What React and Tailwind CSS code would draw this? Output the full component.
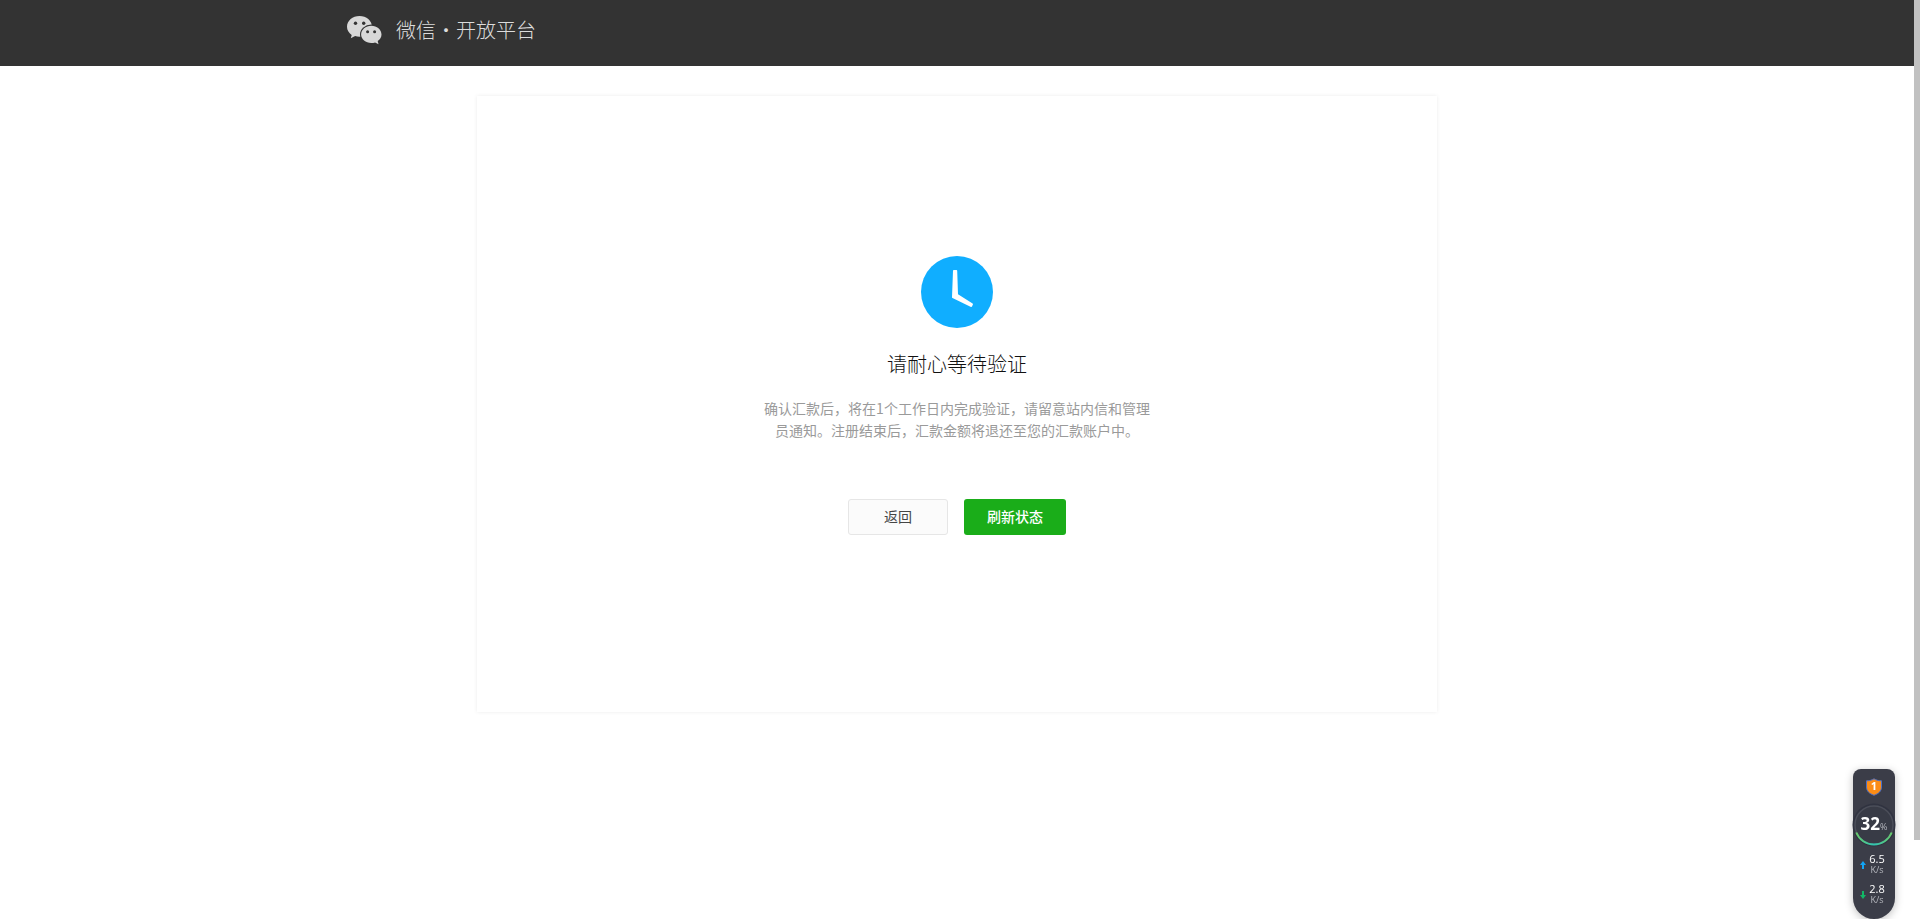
import React from "react";
import { clsx } from "clsx";

const SPEEDS = [
  { id: "up", value: "6.5", label: "Upload", tone: "text-[#12a5f5]" },
  { id: "down", value: "2.8", label: "Download", tone: "text-[#12b866]" },
];

function WechatLogo() {
  return (
    <svg width="35" height="29" viewBox="0 0 35 29" aria-hidden="true">
      <path
        fill="#d8d8d8"
        d="M12.500 0C5.600 0 0 4.700 0 10.800c0 3.300 1.800 6.200 4.700 8.100L3.800 22.300l4.300-2.200c1.400.4 2.900.7 4.400.7 6.900 0 12.500-4.600 12.500-10.300S19.400 0 12.500 0Z"
      />
      <ellipse cx="24.300" cy="18.400" rx="11.300" ry="9.900" fill="#333333" />
      <path
        fill="#d8d8d8"
        d="M24.300 9.800c5.600 0 10.200 3.900 10.200 8.700 0 2.700-1.500 5-3.800 6.600l.8 3.100-3.400-1.800c-1.200.4-2.500.6-3.800.6-5.600 0-10.200-3.800-10.200-8.500s4.600-8.700 10.200-8.700Z"
      />
      <g fill="#333333">
        <circle cx="8.500" cy="7.200" r="1.700" />
        <circle cx="16.700" cy="7.200" r="1.700" />
        <circle cx="20.600" cy="15.700" r="1.500" />
        <circle cx="27.600" cy="15.700" r="1.500" />
      </g>
    </svg>
  );
}

function WaitingIcon() {
  return (
    <svg width="72" height="72" viewBox="0 0 72 72" aria-hidden="true">
      <circle cx="36" cy="36" r="36" fill="#10aeff" />
      <path
        fill="#ffffff"
        d="M32.800 14h2.600c.5 0 .8.3.8.8L37 38.300l14.600 9.300c.4.2.5.600.3 1l-.9 1.900c-.2.4-.6.5-1 .4L31.500 42.100c-.4-.2-.5-.4-.5-.8L32 14.800c0-.5.3-.8.8-.8Z"
      />
    </svg>
  );
}

function Header() {
  return (
    <header className="bg-[#333333] px-6">
      <div className="mx-auto flex h-[66px] max-w-[1220px] items-start gap-[14px] pt-4">
        <WechatLogo />
        <a href="#home" className="text-[20px] leading-7 font-light text-[#dcdcdc]">
          微信・开放平台
        </a>
      </div>
    </header>
  );
}

function SpeedArrow({ direction }) {
  return (
    <svg width="6" height="8" viewBox="0 0 6 8" aria-hidden="true">
      <path
        fill="currentColor"
        d={direction === "up" ? "M3 0 6 4H4V8H2V4H0Z" : "M3 8 0 4h2V0h2v4h2Z"}
      />
    </svg>
  );
}

function SystemMonitor() {
  return (
    <aside className="fixed right-[25px] bottom-0 flex h-[150px] w-[42px] flex-col items-center rounded-t-lg rounded-b-[21px] bg-[#3b3d48] font-['Open_Sans','Noto_Sans',sans-serif] text-white shadow-[0_2px_8px_rgba(0,0,0,0.25)]">
      <svg width="18" height="18" viewBox="0 0 18 18" className="mt-[9px] shrink-0" aria-hidden="true">
        <path
          d="M9 .8c2 1.300 4.500 2 7.500 2V9c0 4-2.700 6.600-7.500 8.300C4.200 15.600 1.500 13 1.500 9V2.800c3 0 5.500-.7 7.500-2Z"
          fill="#fb8c16"
          stroke="#4b70c8"
          strokeWidth="1"
        />
        <text x="9" y="12" textAnchor="middle" fontSize="11" fontWeight="700" fill="#ffffff">
          1
        </text>
      </svg>
      <div className="relative mt-2 flex h-[42px] w-[42px] shrink-0 items-center justify-center">
        <svg width="44" height="44" viewBox="0 0 44 44" className="absolute -left-px -top-px" aria-hidden="true">
          <defs>
            <linearGradient id="usage">
              <stop offset="0" stopColor="#69c96b" />
              <stop offset="0.500" stopColor="#2fc4b2" />
              <stop offset="1" stopColor="#69c96b" />
            </linearGradient>
          </defs>
          <circle cx="22" cy="22" r="21.500" fill="#303340" />
          <circle cx="22" cy="22" r="19" fill="#383b46" stroke="#4b4e59" strokeWidth="1.500" />
          <path d="M4.300 29.500a19 19 0 0 0 35.400 0" fill="none" stroke="url(#usage)" strokeWidth="2" />
        </svg>
        <span className="relative flex items-baseline text-[17px] leading-5 font-bold">
          32<span className="text-[9px] font-normal text-[#b5b7bd]">%</span>
        </span>
      </div>
      <dl className="mt-2 flex flex-col gap-[9px]">
        {SPEEDS.map((s) => (
          <div key={s.id} className="flex items-center gap-[3px] pr-[3px]">
            <dt aria-label={s.label} className={clsx("shrink-0", s.tone)}>
              <SpeedArrow direction={s.id} />
            </dt>
            <dd className="text-center text-[11px] leading-[10px]">
              {s.value}
              <br />
              <small className="text-[9px] text-[#b5b7bd]">K/s</small>
            </dd>
          </div>
        ))}
      </dl>
    </aside>
  );
}

export default function App() {
  return (
    <div className="flex min-h-screen bg-white font-['Noto_Sans_CJK_SC',sans-serif]" lang="zh-CN">
      <div className="min-w-0 flex-1">
        <Header />
        <main className="px-6 py-[30px]">
          <section className="mx-auto flex max-w-[960px] flex-col items-center pt-40 pb-[177px] shadow-[0_0_4px_rgba(0,0,0,0.08)]">
            <WaitingIcon />
            <h1 className="mt-5 text-[20px] leading-8 font-light text-[#111111]">请耐心等待验证</h1>
            <p className="mt-[17px] max-w-[392px] text-center text-[14px] leading-[22px] text-[#9a9a9a]">
              确认汇款后，将在1个工作日内完成验证，请留意站内信和管理员通知。注册结束后，汇款金额将退还至您的汇款账户中。
            </p>
            <div className="mt-[58px] flex gap-4 text-[14px] leading-5">
              <button
                type="button"
                className="h-9 w-[100px] rounded-[3px] border border-[#e6e6e6] bg-[#fbfbfb] pb-[2px] text-[#454545]"
              >
                返回
              </button>
              <button
                type="button"
                className="h-9 w-[102px] rounded-[3px] bg-[#1aad19] pb-[2px] font-medium text-white"
              >
                刷新状态
              </button>
            </div>
          </section>
        </main>
      </div>
      <div className="w-[6px] shrink-0" aria-hidden="true">
        <div className="h-[840px] bg-[#c1c1c1]" />
      </div>
      <SystemMonitor />
    </div>
  );
}
